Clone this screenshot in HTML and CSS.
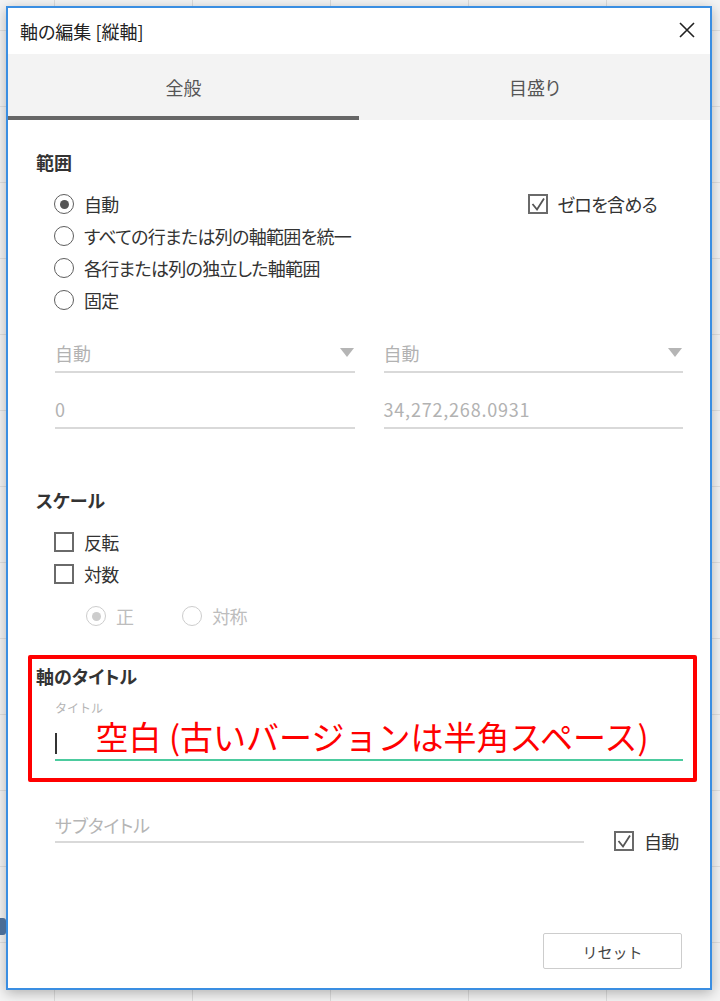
FILE: index.html
```html
<!DOCTYPE html>
<html lang="ja">
<head>
<meta charset="utf-8">
<title>軸の編集 [縦軸]</title>
<link rel="stylesheet" href="styles.css">
</head>
<body>
<div class="bg-mark"></div>
<div class="dialog">
  <header class="titlebar">
    <span class="title">軸の編集 [縦軸]</span>
    <span class="close" aria-label="閉じる">
      <svg width="16" height="16" viewBox="0 0 16 16"><path d="M1 1 L15 15 M15 1 L1 15" stroke="#222" stroke-width="1.6" fill="none"/></svg>
    </span>
  </header>
  <nav class="tabs">
    <div class="tab active">全般</div>
    <div class="tab">目盛り</div>
  </nav>
  <main class="content">
    <section class="sec">
      <h2 class="sec-label">範囲</h2>
      <div class="range-top">
        <ul class="opt-list">
          <li class="opt"><span class="radio checked"></span>自動</li>
          <li class="opt"><span class="radio"></span>すべての行または列の軸範囲を統一</li>
          <li class="opt"><span class="radio"></span>各行または列の独立した軸範囲</li>
          <li class="opt"><span class="radio"></span>固定</li>
        </ul>
        <div class="opt zero">
          <svg class="cbox" width="20" height="20" viewBox="0 0 20 20"><rect x="1" y="1" width="18" height="18" fill="#fff" stroke="#6a6a6a" stroke-width="2"/><polyline points="4.5,10 9,15.5 16,4.5" fill="none" stroke="#555" stroke-width="1.8"/></svg>
          ゼロを含める
        </div>
      </div>
      <div class="fields">
        <div class="field"><span>自動</span><span class="tri"></span></div>
        <div class="field"><span>自動</span><span class="tri"></span></div>
        <div class="field"><span>0</span></div>
        <div class="field"><span class="num">34,272,268.0931</span></div>
      </div>
    </section>

    <section class="sec scale">
      <h2 class="sec-label">スケール</h2>
      <ul class="opt-list checks">
        <li class="opt"><svg class="cbox" width="20" height="20" viewBox="0 0 20 20"><rect x="1" y="1" width="18" height="18" fill="#fff" stroke="#6a6a6a" stroke-width="2"/></svg>反転</li>
        <li class="opt"><svg class="cbox" width="20" height="20" viewBox="0 0 20 20"><rect x="1" y="1" width="18" height="18" fill="#fff" stroke="#6a6a6a" stroke-width="2"/></svg>対数</li>
      </ul>
      <div class="sub-radios">
        <div class="opt disabled"><span class="radio checked"></span>正</div>
        <div class="opt disabled"><span class="radio"></span>対称</div>
      </div>
    </section>

    <section class="sec axis-title">
      <div class="title-block">
        <div class="annot-frame"></div>
        <h2 class="sec-label">軸のタイトル</h2>
        <div class="title-field">
          <div class="mini-label">タイトル</div>
          <div class="title-input"><span class="caret"></span><span class="annot-text">空白 (古いバージョンは半角スペース)</span></div>
        </div>
      </div>
      <div class="subtitle-row">
        <div class="subtitle-field">サブタイトル</div>
        <div class="opt auto">
          <svg class="cbox" width="20" height="20" viewBox="0 0 20 20"><rect x="1" y="1" width="18" height="18" fill="#fff" stroke="#6a6a6a" stroke-width="2"/><polyline points="4.5,10 9,15.5 16,4.5" fill="none" stroke="#555" stroke-width="1.8"/></svg>
          自動
        </div>
      </div>
    </section>
  </main>
  <footer class="footer">
    <button class="reset">リセット</button>
  </footer>
</div>
</body>
</html>
```

FILE: styles.css
```css
html, body {
  margin: 0;
  height: 1001px;
}

body {
  box-sizing: border-box;
  padding: 6px 0 0 6px;
  position: relative;
  font-family: "Noto Sans CJK JP", "Noto Sans", sans-serif;
  font-feature-settings: "palt" 1;
  color: #333;
  background-color: #f4f4f4;
  background-image:
    repeating-linear-gradient(90deg, transparent 0 54px, #dcdcdc 54px 55px, transparent 55px 138px),
    repeating-linear-gradient(180deg, transparent 0 30px, #e0e0e0 30px 31px, transparent 31px 76px);
}

.bg-mark {
  position: absolute;
  left: 0;
  top: 918px;
  width: 6px;
  height: 17px;
  background: #4b6d96;
  border-radius: 0 3px 3px 0;
}

.dialog {
  box-sizing: border-box;
  width: 706px;
  height: 984px;
  border: 2px solid #3a8ee2;
  background: #fff;
  box-shadow: 0 3px 12px rgba(0, 0, 0, 0.28);
  display: flex;
  flex-direction: column;
}

.titlebar {
  height: 46px;
  flex: none;
  display: flex;
  align-items: center;
  justify-content: space-between;
  padding: 0 15px 0 12px;
}

.title {
  font-size: 18px;
  color: #222;
}

.close {
  display: flex;
  margin-top: -2px;
}

.tabs {
  height: 66px;
  flex: none;
  display: grid;
  grid-template-columns: 1fr 1fr;
  background: #f3f3f3;
}

.tab {
  display: flex;
  align-items: center;
  justify-content: center;
  font-size: 18px;
  color: #555;
}

.tab.active {
  box-shadow: inset 0 -4px 0 #666;
}

.content {
  padding: 30px 27px 0 28px;
}

.sec {
  margin: 0;
}

.sec-label {
  margin: 0;
  font-size: 18px;
  line-height: 24px;
  font-weight: 700;
  color: #333;
}

.range-top {
  margin-top: 14px;
  display: flex;
  justify-content: space-between;
  align-items: flex-start;
}

.opt-list {
  list-style: none;
  margin: 0;
  padding: 0 0 0 18px;
}

.opt {
  height: 32px;
  display: flex;
  align-items: center;
  gap: 10px;
  font-size: 18px;
  letter-spacing: -0.7px;
  color: #333;
  white-space: nowrap;
}

.radio {
  box-sizing: border-box;
  width: 20px;
  height: 20px;
  flex: none;
  border-radius: 50%;
  border: 1.6px solid #5e5e5e;
  display: grid;
  place-items: center;
  background: #fff;
}

.radio.checked::after {
  content: "";
  width: 9px;
  height: 9px;
  border-radius: 50%;
  background: #555;
}

.cbox {
  flex: none;
  display: block;
}

.zero {
  margin-right: 26px;
}

.fields {
  margin-top: 18px;
  padding-left: 19px;
  display: grid;
  grid-template-columns: 1fr 1fr;
  column-gap: 29px;
  row-gap: 17px;
}

.field {
  box-sizing: border-box;
  height: 39px;
  border-bottom: 2px solid #d9d9d9;
  display: flex;
  align-items: center;
  justify-content: space-between;
  font-size: 18px;
  color: #b2b2b2;
}

.num {
  letter-spacing: 0.8px;
}

.tri {
  width: 0;
  height: 0;
  margin-right: 1px;
  border-left: 7px solid transparent;
  border-right: 7px solid transparent;
  border-top: 9px solid #b5b5b5;
}

.scale {
  margin-top: 59px;
}

.checks {
  margin-top: 14px;
}

.sub-radios {
  margin-top: 10px;
  padding-left: 50px;
  display: flex;
  gap: 49px;
}

.opt.disabled {
  color: #bdbdbd;
}

.opt.disabled .radio {
  border-color: #cdcdcd;
}

.opt.disabled .radio.checked::after {
  background: #cdcdcd;
}

.axis-title {
  margin-top: 32px;
}

.title-block {
  position: relative;
}

.annot-frame {
  position: absolute;
  top: -9px;
  left: -8px;
  right: -14px;
  bottom: -21px;
  border: 4.5px solid #f00;
  border-radius: 2px;
  pointer-events: none;
}

.title-field {
  margin-top: 12px;
  padding-left: 19px;
}

.mini-label {
  font-size: 12px;
  line-height: 16px;
  color: #b5b5b5;
  font-feature-settings: normal;
}

.title-input {
  box-sizing: border-box;
  height: 45px;
  border-bottom: 2px solid #4ccb9e;
  display: flex;
  align-items: center;
}

.caret {
  width: 1.5px;
  height: 21px;
  background: #333;
  margin-top: 11px;
  flex: none;
}

.annot-text {
  margin-left: 39px;
  margin-top: -4px;
  font-size: 33px;
  line-height: 40px;
  color: #f00;
  white-space: nowrap;
  font-feature-settings: normal;
}

.subtitle-row {
  margin-top: 38px;
  padding-left: 19px;
  display: flex;
  align-items: flex-start;
}

.subtitle-field {
  box-sizing: border-box;
  width: 529px;
  padding: 14px 0 4px;
  line-height: 24px;
  font-size: 18px;
  color: #b5b5b5;
  border-bottom: 2px solid #d9d9d9;
}

.opt.auto {
  height: 24px;
  margin-left: 30px;
  margin-top: 30px;
}

.footer {
  margin-top: auto;
  padding: 0 28px 19px;
  display: flex;
  justify-content: flex-end;
}

.reset {
  box-sizing: border-box;
  width: 139px;
  height: 36px;
  background: #fff;
  border: 1.5px solid #cdcdcd;
  border-radius: 2px;
  font-family: "Noto Sans CJK JP", "Noto Sans", sans-serif;
  font-size: 15px;
  color: #444;
  padding: 0;
}
```
